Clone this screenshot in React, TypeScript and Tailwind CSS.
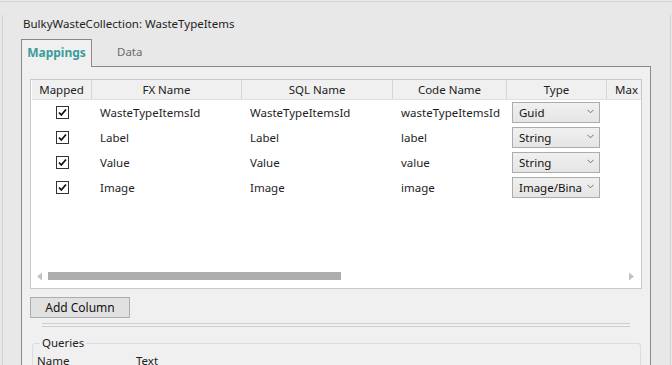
import React from "react";

const font = { fontFamily: '"Noto Sans", "Open Sans", sans-serif' };

function Check() {
  return (
    <div className="w-[13px] h-[13px] border border-[#333333] bg-white flex items-center justify-center">
      <svg width="11" height="11" viewBox="0 0 11 11">
        <path d="M2 5.5 L4.3 8 L9 2.5" fill="none" stroke="#111" strokeWidth="1.8" />
      </svg>
    </div>
  );
}

function Combo({ value }: { value: string }) {
  return (
    <div className="w-[88px] h-[21px] border border-[#acacac] bg-gradient-to-b from-[#f0f0f0] to-[#e5e5e5] flex items-center pl-[6px] pr-[5px] text-[11.5px] text-[#111]">
      <span className="flex-1 whitespace-nowrap overflow-hidden">{value}</span>
      <svg width="7" height="5" viewBox="0 0 7 5" className="ml-[2px] mb-[3px]">
        <path d="M0.5 0.8 L3.5 3.8 L6.5 0.8" fill="none" stroke="#707070" strokeWidth="1" />
      </svg>
    </div>
  );
}

const rows = [
  { fx: "WasteTypeItemsId", sql: "WasteTypeItemsId", code: "wasteTypeItemsId", type: "Guid" },
  { fx: "Label", sql: "Label", code: "label", type: "String" },
  { fx: "Value", sql: "Value", code: "value", type: "String" },
  { fx: "Image", sql: "Image", code: "image", type: "Image/Bina" },
];

export default function App() {
  return (
    <div className="w-[672px] h-[365px] overflow-hidden bg-[#e8e8e8] pt-px text-[11.5px] text-[#1e1e1e]" style={font}>
      <div className="h-px bg-[#d4d4d4]" />
      <div className="mt-[13px] ml-[2px] mr-[1px] h-[400px] border-l border-r border-[#d2d2d2] pl-[18px]">
        <div className="h-[18px] leading-[18px] pl-[2px] text-[#222]">BulkyWasteCollection: WasteTypeItems</div>
        <div className="mt-[6px] w-[630px]">
          <div className="flex h-[28px]">
            <div className="w-[71px] h-[28px] border-l border-t border-r border-[#898989] bg-[#f0f0f0] flex items-center justify-center font-bold text-[12px] text-[#3c9c9c] pb-[1px]">
              Mappings
            </div>
            <div className="flex-1 h-[28px] border-b border-[#898989] flex items-center pl-[25px] pb-[1px] text-[#6d6d6d]">
              Data
            </div>
          </div>
          <div className="h-[300px] border-l border-r border-[#898989] bg-[#f0f0f0] pt-[12px] pl-[8px]">
            <div className="w-[612px] h-[210px] border border-[#c9c9c9] bg-white flex flex-col pt-0">
              <div className="flex h-[20px] ml-px bg-[#f0f0f0] border-b border-[#e0e0e0] text-[#222]">
                <div className="w-[60px] border-r border-[#d5d5d5] flex items-center justify-center">Mapped</div>
                <div className="w-[150px] border-r border-[#d5d5d5] flex items-center justify-center">FX Name</div>
                <div className="w-[151px] border-r border-[#d5d5d5] flex items-center justify-center">SQL Name</div>
                <div className="w-[114px] border-r border-[#d5d5d5] flex items-center justify-center">Code Name</div>
                <div className="w-[100px] border-r border-[#d5d5d5] flex items-center justify-center">Type</div>
                <div className="flex-1 flex items-center pl-[8px] overflow-hidden">Max</div>
              </div>
              {rows.map((r) => (
                <div key={r.fx} className="flex h-[25px] ml-px items-center">
                  <div className="w-[60px] flex justify-center pl-[1px]">
                    <Check />
                  </div>
                  <div className="w-[150px] pl-[8px]">{r.fx}</div>
                  <div className="w-[151px] pl-[8px]">{r.sql}</div>
                  <div className="w-[114px] pl-[8px]">{r.code}</div>
                  <div className="w-[100px] pl-[5px]">
                    <Combo value={r.type} />
                  </div>
                </div>
              ))}
              <div className="flex-1" />
              <div className="h-[16px] mb-[4px] flex items-center pl-[5px] pr-[6px]">
                <svg width="7" height="9" viewBox="0 0 7 9">
                  <path d="M6 0.5 L1 4.5 L6 8.5 Z" fill="#c2c2c2" />
                </svg>
                <div className="ml-[5px] w-[293px] h-[8px] bg-[#adadad]" />
                <div className="flex-1" />
                <svg width="7" height="9" viewBox="0 0 7 9">
                  <path d="M1 0.5 L6 4.5 L1 8.5 Z" fill="#c2c2c2" />
                </svg>
              </div>
            </div>
            <button className="mt-[8px] w-[100px] h-[21px] border border-[#adadad] bg-[#e1e1e1] flex items-center justify-center text-[12px] text-[#111]">
              Add Column
            </button>
            <div className="mt-[5px] ml-[12px] w-[588px] h-[4px] border-t border-b border-[#cfcfcf]" />
            <fieldset className="mt-[8px] ml-[2px] w-[609px] h-[60px] border border-[#d8dde2] rounded-[3px] pl-[4px] pt-[2px]">
              <legend className="ml-[3px] px-[2px] leading-[16px] text-[#222]">Queries</legend>
              <div className="flex leading-[16px] text-[#222]">
                <div className="w-[99px]">Name</div>
                <div>Text</div>
              </div>
            </fieldset>
          </div>
        </div>
      </div>
    </div>
  );
}
